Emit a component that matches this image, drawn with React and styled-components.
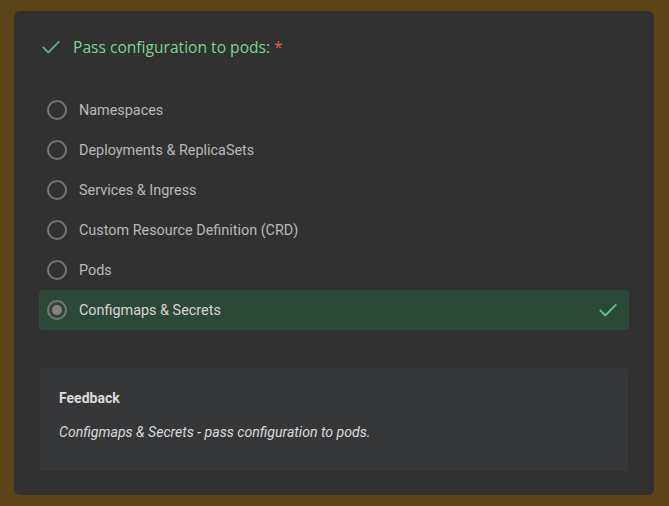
import React from "react";
import styled, { createGlobalStyle } from "styled-components";

const Global = createGlobalStyle`
  html, body { margin: 0; padding: 0; background: #5c4419; }
  body { font-family: Roboto, "Liberation Sans", sans-serif; }
`;

const Page = styled.div`
  padding: 11px 15px 11px 14px;
  box-sizing: border-box;
  min-height: 506px;
`;

const Card = styled.div`
  background: #313131;
  border-radius: 6px;
  height: 484px;
  box-sizing: border-box;
  padding: 24px 25px 0 25px;
  display: flex;
  flex-direction: column;
`;

const Title = styled.div`
  display: flex;
  align-items: center;
  gap: 11px;
  height: 24px;
  padding-left: 1px;
  font-family: "Open Sans", sans-serif;
  font-size: 15.6px;
  color: #81d195;
`;

const Star = styled.span`
  color: #e05a4f;
  margin-left: 4px;
`;

const Options = styled.div`
  display: flex;
  flex-direction: column;
  margin-top: 31px;
`;

const Option = styled.div`
  display: flex;
  align-items: center;
  height: 40px;
  padding: 0 10px 0 8px;
  border-radius: 4px;
  background: ${(p) => (p.$selected ? "#2c4838" : "transparent")};
  color: ${(p) => (p.$selected ? "#d6d6d6" : "#b9b9b9")};
  font-size: 14.4px;
`;

const Radio = styled.span`
  width: 20px;
  height: 20px;
  box-sizing: border-box;
  border: 2px solid #767676;
  border-radius: 50%;
  display: flex;
  align-items: center;
  justify-content: center;
  flex-shrink: 0;
  margin-right: 12px;
  &::after {
    content: "";
    display: ${(p) => (p.$checked ? "block" : "none")};
    width: 10px;
    height: 10px;
    border-radius: 50%;
    background: #8d7f7f;
  }
`;

const Label = styled.span`
  flex: 1;
`;

const Feedback = styled.div`
  margin: 38px 1px 0 1px;
  background: #363739;
  border-radius: 2px;
  height: 103px;
  box-sizing: border-box;
  padding: 21px 19px;
  color: #dcdcdc;
`;

const FeedbackTitle = styled.div`
  font-weight: 700;
  font-size: 14px;
  line-height: 18px;
`;

const FeedbackText = styled.div`
  font-style: italic;
  font-size: 14.1px;
  line-height: 18px;
  margin-top: 16px;
`;

const Check = ({ color, size = 20 }) => (
  <svg width={size} height={size} viewBox="0 0 24 24" fill="none">
    <path d="M3.5 12.5l5.5 5.5L20.5 6.5" stroke={color} strokeWidth="2" strokeLinecap="round" strokeLinejoin="round" />
  </svg>
);

const items = [
  "Namespaces",
  "Deployments & ReplicaSets",
  "Services & Ingress",
  "Custom Resource Definition (CRD)",
  "Pods",
  "Configmaps & Secrets",
];

export default function App() {
  return (
    <>
      <Global />
      <Page>
        <Card>
          <Title>
            <Check color="#5fae7c" size={22} />
            <span>
              Pass configuration to pods:<Star>*</Star>
            </span>
          </Title>
          <Options>
            {items.map((it, i) => {
              const sel = i === items.length - 1;
              return (
                <Option key={it} $selected={sel}>
                  <Radio $checked={sel} />
                  <Label>{it}</Label>
                  {sel && <Check color="#5fc088" size={22} />}
                </Option>
              );
            })}
          </Options>
          <Feedback>
            <FeedbackTitle>Feedback</FeedbackTitle>
            <FeedbackText>Configmaps &amp; Secrets - pass configuration to pods.</FeedbackText>
          </Feedback>
        </Card>
      </Page>
    </>
  );
}
